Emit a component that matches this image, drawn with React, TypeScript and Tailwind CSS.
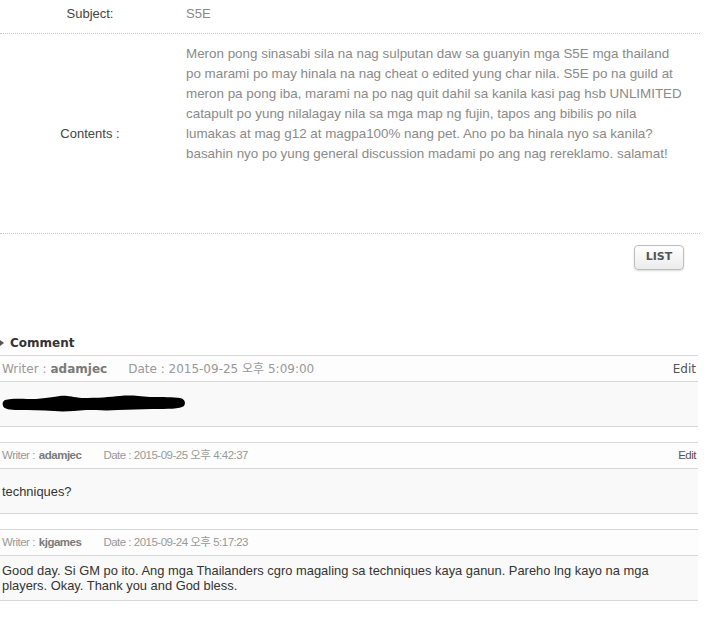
import React from 'react';

const COMMENTS = [
  {
    writer: 'adamjec',
    date: '2015-09-25 오후 5:09:00',
    edit: true,
    wide: true,
    body: null as string | null,
  },
  {
    writer: 'adamjec',
    date: '2015-09-25 오후 4:42:37',
    edit: true,
    wide: false,
    body: 'techniques?',
  },
  {
    writer: 'kjgames',
    date: '2015-09-24 오후 5:17:23',
    edit: false,
    wide: false,
    body: 'Good day. Si GM po ito. Ang mga Thailanders cgro magaling sa techniques kaya ganun. Pareho lng kayo na mga players. Okay. Thank you and God bless.',
  },
];

const CONTENTS =
  'Meron pong sinasabi sila na nag sulputan daw sa guanyin mga S5E mga thailand po marami po may hinala na nag cheat o edited yung char nila. S5E po na guild at meron pa pong iba, marami na po nag quit dahil sa kanila kasi pag hsb UNLIMITED catapult po yung nilalagay nila sa mga map ng fujin, tapos ang bibilis po nila lumakas at mag g12 at magpa100% nang pet. Ano po ba hinala nyo sa kanila? basahin nyo po yung general discussion madami po ang nag rereklamo. salamat!';

const Redacted = () => (
  <svg width="184" height="20" viewBox="0 0 184 20" className="block">
    <path
      d="M3 6 C10 4 22 5 34 5 C44 4 52 3 58 2 C64 1 70 3 80 4 C96 4 108 3 118 2 C128 1 136 2 148 3 C160 3 172 3 178 4 C183 5 184 9 182 12 C178 15 166 15 150 15 C138 15 128 16 116 16 C104 17 94 16 84 16 C72 17 62 18 52 17 C40 16 28 16 16 16 C8 16 2 15 1 12 C0 9 1 7 3 6 Z"
      fill="#000"
    />
  </svg>
);

export default function App() {
  return (
    <div className="w-[707px] h-[630px] overflow-hidden bg-white font-['Liberation_Sans','Noto_Sans_CJK_KR',sans-serif]">
      {/* view table */}
      <div className="w-[700px]">
        <div className="flex h-[34px] items-start border-b border-dotted border-[#c8c8c8] pt-[6px] text-[13px] leading-[16px]">
          <div className="w-[180px] text-center text-[#444]">Subject:</div>
          <div className="pl-[6px] text-[#888]">S5E</div>
        </div>
        <div className="flex h-[200px] border-b border-dotted border-[#c8c8c8]">
          <div className="flex w-[180px] items-center justify-center text-[13px] text-[#444]">Contents :</div>
          <div className="w-[503px] pl-[6px] pt-[10px] text-[13.4px] leading-[20px] text-[#8a8a8a]">{CONTENTS}</div>
        </div>
      </div>

      <div className="flex w-[684px] justify-end pt-[11px]">
        <button className="h-[25px] w-[50px] rounded-[4px] border border-[#bdbdbd] bg-gradient-to-b from-white to-[#ececec] text-[11px] font-bold text-[#555] shadow-[0_1px_2px_rgba(0,0,0,0.15)] font-['DejaVu_Sans',sans-serif]">
          LIST
        </button>
      </div>

      {/* comments */}
      <div className="mt-[63px] w-[698px]">
        <div className="flex h-[20px] items-center gap-[6px] font-['DejaVu_Sans',sans-serif]">
          <span className="h-0 w-0 border-y-[3px] border-l-[4px] border-y-transparent border-l-[#555]" />
          <span className="text-[12px] font-bold text-[#333]">Comment</span>
        </div>

        {COMMENTS.map((c, i) => (
          <div key={i} className={i === 0 ? 'mt-[2px]' : 'mt-[15px]'}>
            <div
              className={
                'flex h-[27px] items-center justify-between border-y border-[#d8d8d8] bg-[#fdfdfd] px-[2px] ' +
                (c.wide
                  ? "text-[12px] font-['DejaVu_Sans','Noto_Sans_CJK_KR',sans-serif]"
                  : 'text-[11.5px] tracking-[-0.5px]')
              }
            >
              <div className="flex items-center text-[#999]">
                <span>Writer : </span>
                <span className="ml-[4px] font-bold text-[#7a7a7a]">{c.writer}</span>
                <span className={c.wide ? 'ml-[21px]' : 'ml-[22px]'}>Date : {c.date}</span>
              </div>
              {c.edit && <span className="text-[#555]">Edit</span>}
            </div>
            <div className="flex min-h-[45px] items-center border-b border-[#d8d8d8] bg-[#f9f9f9] px-[2px] py-[7px] text-[12.9px] leading-[15px] text-[#333]">
              {c.body === null ? <Redacted /> : <span>{c.body}</span>}
            </div>
          </div>
        ))}
      </div>
    </div>
  );
}
